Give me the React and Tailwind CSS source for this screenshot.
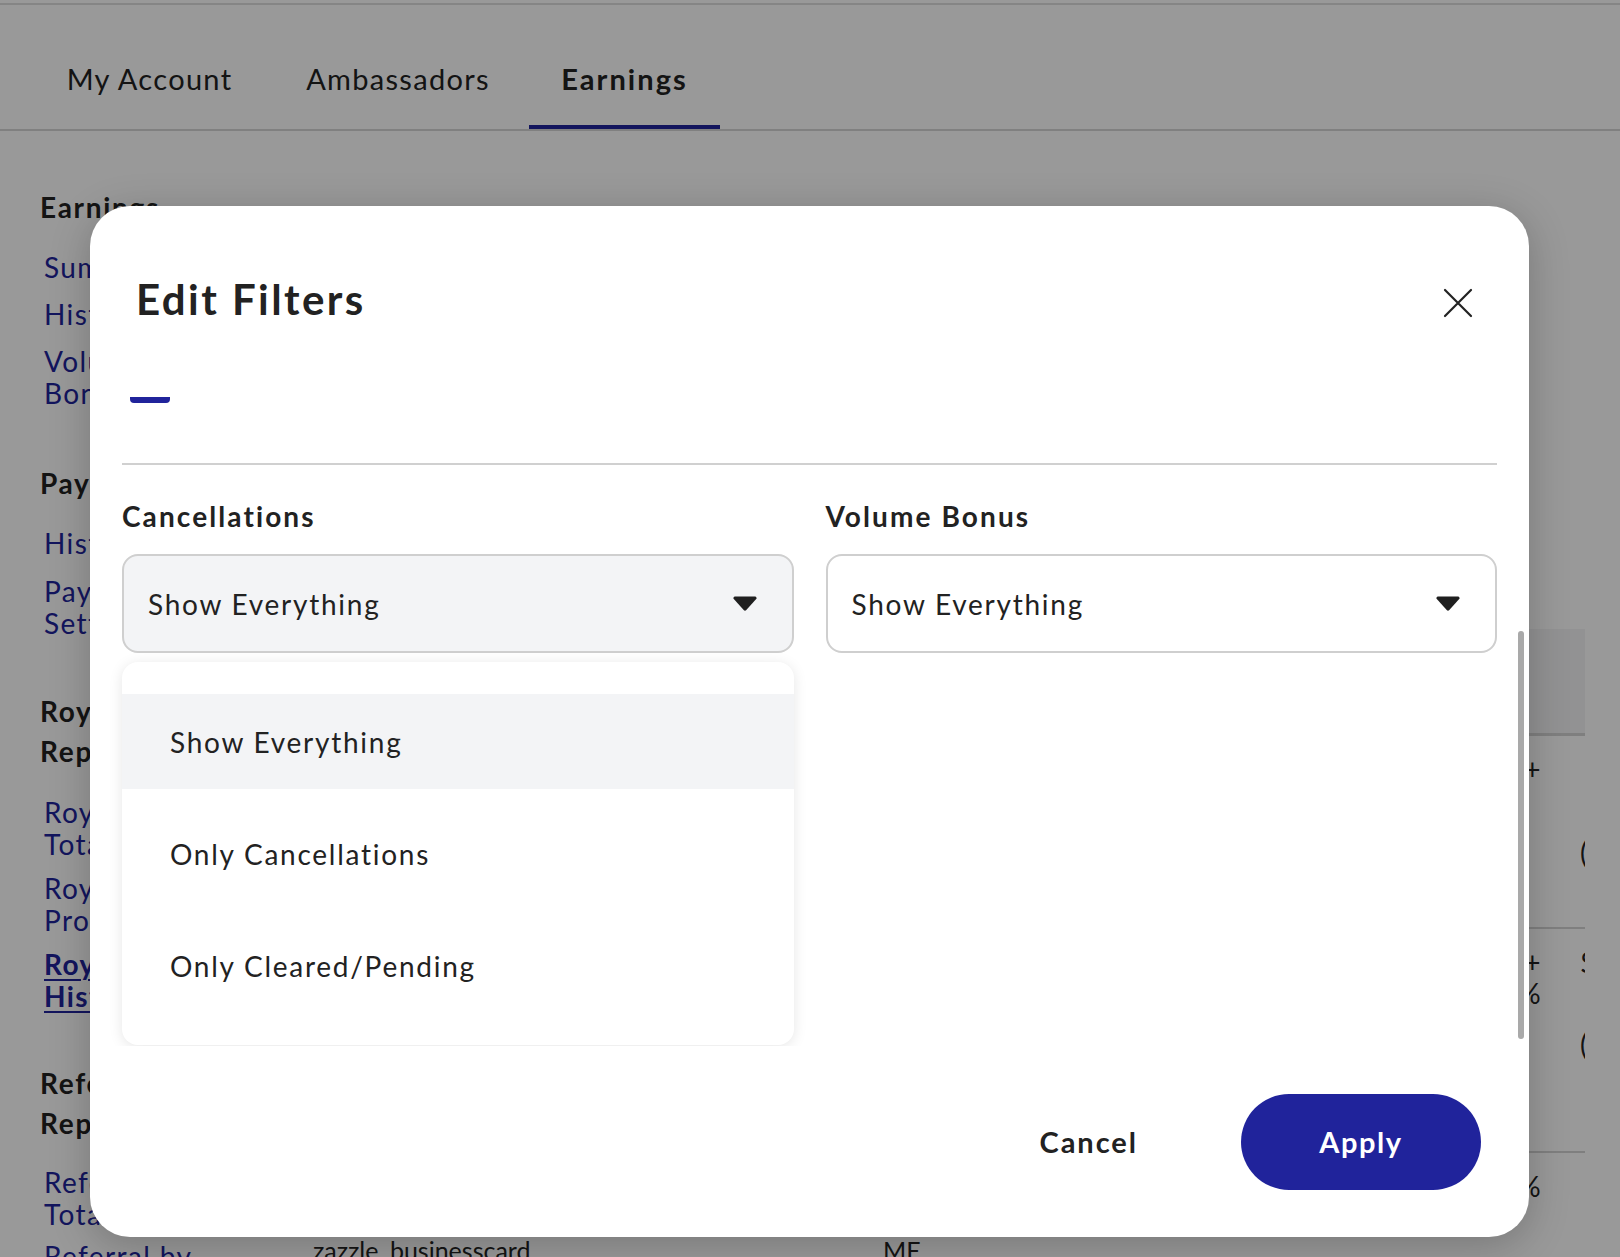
import React from "react";

function Heading({ children }) {
  return (
    <div className="text-[28px] font-bold leading-[40px] tracking-[0.06em] text-[#222222]">{children}</div>
  );
}

function NavLink({ children, active }) {
  return (
    <div
      className={
        "pl-[4px] text-[28px] leading-[32px] tracking-[0.05em] text-[#20239b] " +
        (active ? "font-bold underline decoration-2 underline-offset-4" : "")
      }
    >
      {children}
    </div>
  );
}

function Sidebar() {
  return (
    <div className="w-[290px] shrink-0 pl-[40px] pt-[56px]">
      <Heading>Earnings</Heading>
      <div className="mt-[24px] flex flex-col gap-[15px]">
        <NavLink>Summary</NavLink>
        <NavLink>History</NavLink>
        <NavLink>
          Volume
          <br />
          Bonus
        </NavLink>
      </div>
      <div className="mt-[54px]">
        <Heading>Payments</Heading>
      </div>
      <div className="mt-[24px] flex flex-col gap-[16px]">
        <NavLink>History</NavLink>
        <NavLink>
          Payment
          <br />
          Settings
        </NavLink>
      </div>
      <div className="mt-[52px]">
        <Heading>
          Royalty
          <br />
          Reports
        </Heading>
      </div>
      <div className="mt-[25px] flex flex-col gap-[12px]">
        <NavLink>
          Royalty
          <br />
          Totals
        </NavLink>
        <NavLink>
          Royalty
          <br />
          Products
        </NavLink>
        <NavLink active>
          Royalty
          <br />
          History
        </NavLink>
      </div>
      <div className="mt-[51px]">
        <Heading>
          Referral
          <br />
          Reports
        </Heading>
      </div>
      <div className="mt-[23px] flex flex-col gap-[10px]">
        <NavLink>
          Referral
          <br />
          Totals
        </NavLink>
        <NavLink>
          Referral by
          <br />
          Product
        </NavLink>
      </div>
    </div>
  );
}

function Row({ h, a, b, c, d, pa = "pt-[18px]", border = true, small = false }) {
  return (
    <div
      className={
        "flex text-[28px] leading-[31px] tracking-[0.05em] text-[#222222] " +
        (border ? "border-b-2 border-[#d4d4d4]" : "")
      }
      style={{ height: h }}
    >
      <div className={"w-[570px] shrink-0 pl-[23px] " + pa + (small ? " text-[25px] tracking-normal" : "")}>{a}</div>
      <div className={"w-[500px] shrink-0 pl-[23px] " + pa + (small ? " text-[25px] tracking-normal" : "")}>{b}</div>
      <div className="w-[182px] shrink-0 pt-[18px] text-right">{c}</div>
      <div className="w-[300px] shrink-0 pl-[38px] pt-[18px]">{d}</div>
    </div>
  );
}

function MainArea() {
  return (
    <div className="w-[1295px] shrink-0 overflow-hidden pt-[498px]">
      <div className="w-[1600px]">
        <div className="flex h-[107px] border-b-[3px] border-[#d4d4d4] bg-[#f3f4f6] text-[26px] font-bold leading-[31px]">
          <div className="w-[570px] pl-[23px] pt-[36px]">Product</div>
          <div className="w-[500px] pl-[23px] pt-[36px]">Type</div>
          <div className="w-[182px] pt-[36px] text-right"></div>
          <div className="w-[300px] pl-[38px] pt-[36px]"></div>
        </div>
        <Row
          h="193px"
          a="Custom Business Card"
          b="Royalty"
          c={<>Cleared +</>}
          d={<div className="pt-[83px]">(0.12)</div>}
        />
        <Row
          h="224px"
          a="Classic Round Sticker"
          b="Royalty"
          c={
            <>
              $4.50 +
              <br />
              10%
            </>
          }
          d={
            <>
              <div>$0.45</div>
              <div className="mt-[51px]">(0.05)</div>
            </>
          }
        />
        <Row
          h="220px"
          border={false}
          small
          pa="pt-[82px]"
          a="zazzle_businesscard"
          b="ME"
          c={<>15%</>}
          d={null}
        />
      </div>
    </div>
  );
}

function TabsBar() {
  const tab = "flex flex-col items-center pt-[56px] text-[29px] leading-[36px]";
  return (
    <div className="flex border-b-2 border-[#d6d6d6]">
      <div className={tab + " ml-[35px] w-[229px] tracking-[0.045em]"}>
        <div>My Account</div>
        <div className="mt-[28px] h-[4px] w-full" />
      </div>
      <div className={tab + " ml-[7px] w-[254px] tracking-[0.045em]"}>
        <div>Ambassadors</div>
        <div className="mt-[28px] h-[4px] w-full" />
      </div>
      <div className={tab + " ml-[4px] w-[191px] font-bold tracking-[0.07em]"}>
        <div>Earnings</div>
        <div className="mt-[28px] h-[4px] w-full bg-[#20239b]" />
      </div>
    </div>
  );
}

function Caret() {
  return (
    <svg width="24" height="15" viewBox="0 0 24 15" className="shrink-0">
      <path
        d="M2 0.5 H22 A1.6 1.6 0 0 1 23.2 3.1 L13.3 14 A1.8 1.8 0 0 1 10.7 14 L0.8 3.1 A1.6 1.6 0 0 1 2 0.5 Z"
        fill="#1f1f1f"
      />
    </svg>
  );
}

function Select({ filled }) {
  return (
    <div
      className={
        "flex h-[99px] items-center justify-between rounded-[16px] border-2 border-[#cfcfcf] pl-[24px] pr-[35px] " +
        (filled ? "bg-[#f3f4f6]" : "bg-white")
      }
    >
      <span className="text-[28px] leading-[34px] tracking-[0.062em] text-[#222222]">Show Everything</span>
      <Caret />
    </div>
  );
}

function CloseIcon() {
  return (
    <svg width="30" height="30" viewBox="0 0 30 30">
      <path d="M2 2 L28 28 M28 2 L2 28" stroke="#222222" strokeWidth="2.2" strokeLinecap="round" />
    </svg>
  );
}

function MenuItem({ children, active }) {
  return (
    <div
      className={
        "flex h-[95px] items-center pl-[48px] text-[28px] tracking-[0.062em] text-[#222222] " +
        (active ? "bg-[#f3f4f6]" : "")
      }
    >
      {children}
    </div>
  );
}

function Modal() {
  return (
    <div className="absolute left-[90px] top-[206px] flex h-[1031px] w-[1439px] flex-col overflow-hidden rounded-[40px] bg-white shadow-[0_8px_40px_rgba(0,0,0,0.22)]">
      {/* header */}
      <div className="flex h-[117px] shrink-0 items-end justify-between pl-[46px] pr-[56px]">
        <h2 className="text-[42px] font-bold leading-[48px] tracking-[0.058em] text-[#222222]">Edit Filters</h2>
        <div className="mb-[5px] flex h-[30px] w-[30px] items-center justify-center">
          <CloseIcon />
        </div>
      </div>
      {/* tab strip */}
      <div className="mx-[32px] h-[142px] shrink-0 border-b-2 border-[#d0d0d0] pl-[8px] pt-[74px]">
        <div className="h-[6px] w-[40px] rounded-b-[4px] bg-[#20239b]" />
      </div>
      {/* scroll body */}
      <div className="relative h-[581px] shrink-0 overflow-hidden">
        <div className="grid grid-cols-2 gap-x-[32px] px-[32px] pt-[33px]">
          <div>
            <div className="text-[28px] font-bold leading-[36px] tracking-[0.075em] text-[#222222]">
              Cancellations
            </div>
            <div className="mt-[20px]">
              <Select filled />
            </div>
            <div className="mt-[9px] rounded-[16px] bg-white py-[32px] shadow-[0_2px_14px_rgba(0,0,0,0.10)]">
              <div className="flex flex-col gap-[17px]">
                <MenuItem active>Show Everything</MenuItem>
                <MenuItem>Only Cancellations</MenuItem>
                <MenuItem>Only Cleared/Pending</MenuItem>
              </div>
            </div>
          </div>
          <div>
            <div className="text-[28px] font-bold leading-[36px] tracking-[0.075em] text-[#222222]">
              Volume Bonus
            </div>
            <div className="mt-[20px]">
              <Select />
            </div>
          </div>
        </div>
        <div className="absolute right-[5px] top-[166px] h-[408px] w-[6px] rounded-full bg-[#a9a9a9]" />
      </div>
      {/* footer */}
      <div className="flex h-[191px] shrink-0 items-center justify-end pr-[48px]">
        <span className="mr-[103px] text-[29px] font-bold leading-[36px] tracking-[0.068em] text-[#222222]">
          Cancel
        </span>
        <button className="flex h-[96px] w-[240px] items-center justify-center rounded-full bg-[#20239b] text-[29px] font-bold tracking-[0.055em] text-white">
          Apply
        </button>
      </div>
    </div>
  );
}

export default function App() {
  return (
    <div className="relative h-[1257px] w-[1620px] overflow-hidden bg-white font-['Lato',sans-serif] text-[#222222]">
      <div className="h-[3px]" />
      <div className="border-b-2 border-[#dedede]" />
      <TabsBar />
      <div className="flex">
        <Sidebar />
        <MainArea />
      </div>
      <div className="absolute inset-0 bg-black/40" />
      <Modal />
    </div>
  );
}
